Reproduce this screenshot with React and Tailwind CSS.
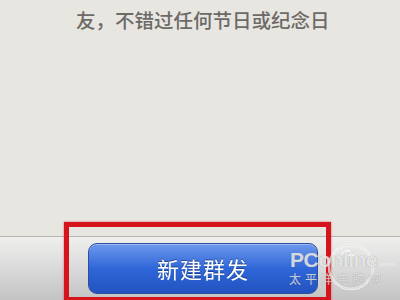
import React from "react";

export default function App() {
  const cjk = { fontFamily: '"Noto Sans CJK SC", "Noto Sans", sans-serif' };
  return (
    <div className="relative w-[400px] h-[300px] overflow-hidden bg-[#e8e6e1] flex flex-col" style={cjk}>
      <div className="flex-1 overflow-hidden pl-[76px] text-[19.5px] leading-[26px] text-[#6c6a67] font-medium">
        <div className="mt-[-24px] h-[26px] whitespace-nowrap">可以一次把祝福发送给多个好</div>
        <div className="mt-[5px] whitespace-nowrap">友，不错过任何节日或纪念日</div>
      </div>
      <div className="h-[64px] border-t border-[#b5b4b0] bg-gradient-to-b from-[#efefee] via-[#dadada] to-[#c3c3c3] pt-[6px] pl-[88px]">
        <div className="w-[230px] h-[51px] rounded-[9px] border border-[#2b4f9e] bg-gradient-to-b from-[#6d97ec] via-[#2f66d8] to-[#2253c0] shadow-[inset_0_1px_0_rgba(255,255,255,0.35)] flex items-center justify-center">
          <span className="text-white text-[22px] tracking-[1px] drop-shadow-[0_-1px_0_rgba(0,0,0,0.35)]">新建群发</span>
        </div>
      </div>

      {/* red annotation box */}
      <div className="absolute left-[64px] top-[222px] w-[267px] h-[80px] border-[5px] border-[#d4161c] shadow-[0_0_2px_rgba(212,22,28,0.6)]" />

      {/* watermark */}
      <div className="absolute left-[288px] top-[236px] w-[110px] h-[60px] pointer-events-none">
        <svg className="absolute left-[38px] top-[6px]" width="50" height="50" viewBox="0 0 50 50">
          <circle cx="25" cy="25" r="22" fill="none" stroke="rgba(255,255,255,0.7)" strokeWidth="2.5" />
          <circle cx="25" cy="25" r="22" fill="none" stroke="rgba(120,120,120,0.25)" strokeWidth="0.8" />
          <path d="M16 12 q4 -5 9 -2 M22 14 q3 -3 6 0" fill="none" stroke="rgba(255,255,255,0.7)" strokeWidth="2" />
        </svg>
        <div className="absolute left-[2px] top-[13px] flex items-end">
          <span className="text-[21px] leading-[21px] font-bold text-white/75 tracking-[-0.5px] [text-shadow:0_0_1px_rgba(90,90,90,0.6)]" style={{ fontFamily: '"Liberation Sans", Arial, sans-serif' }}>PConline</span>
          <span className="text-[5px] leading-[6px] text-white/60 ml-[1px] mb-[3px]" style={{ fontFamily: '"Liberation Sans", Arial, sans-serif' }}>.com.cn</span>
        </div>
        <div className="absolute left-[1px] top-[37px] text-[12px] leading-[12px] tracking-[4px] text-white/70 [text-shadow:0_0_1px_rgba(90,90,90,0.6)]">
          太平洋电脑网
        </div>
      </div>
    </div>
  );
}
